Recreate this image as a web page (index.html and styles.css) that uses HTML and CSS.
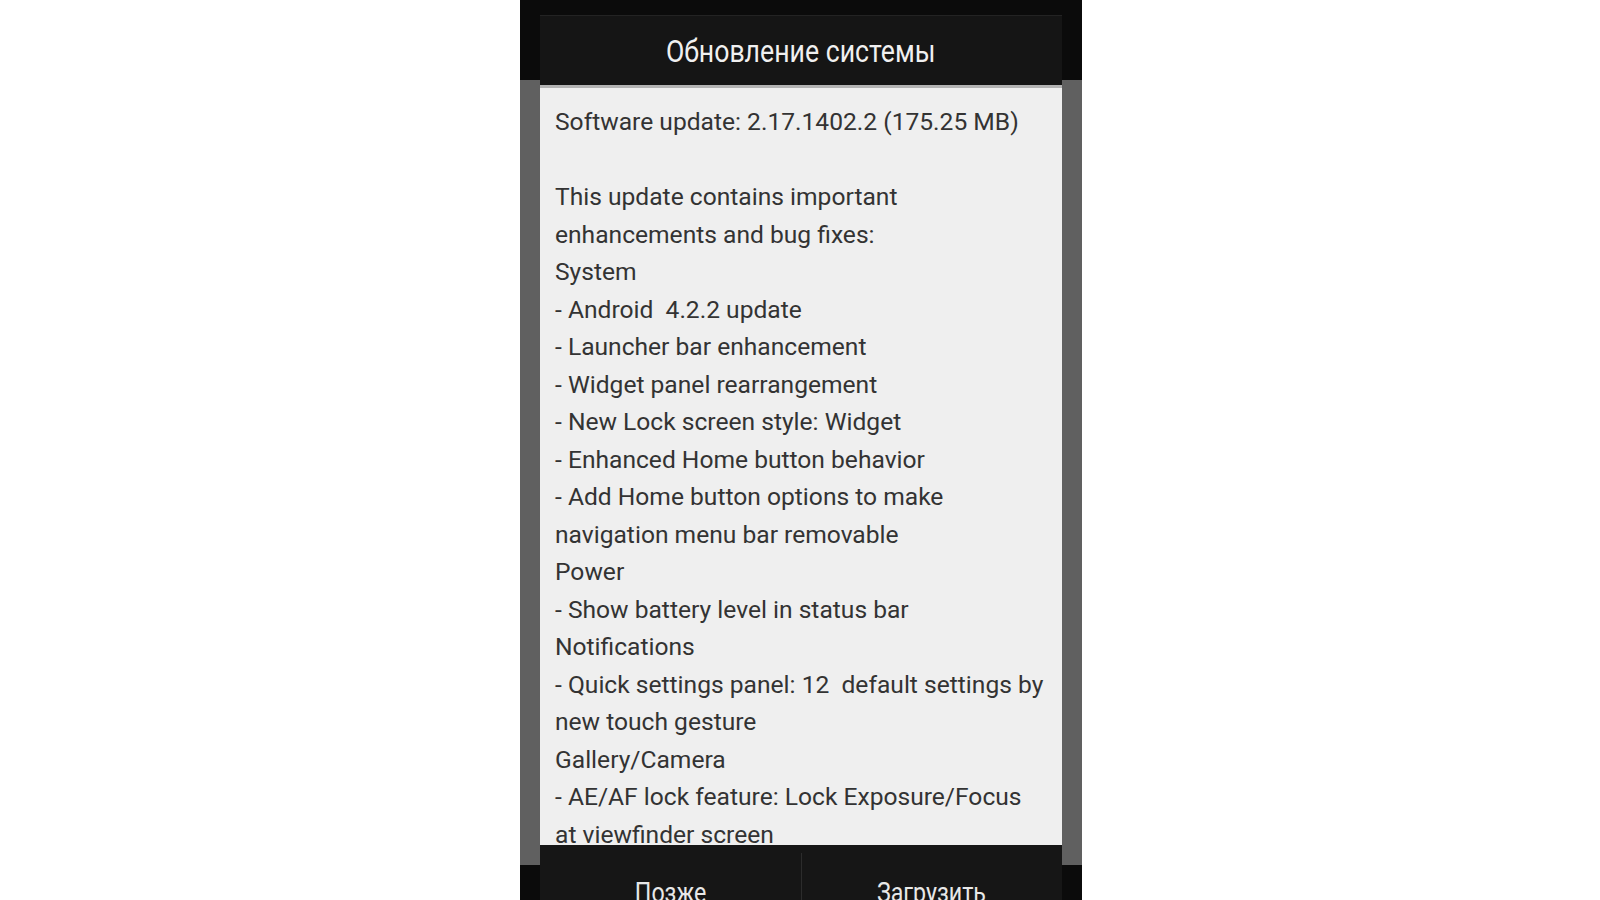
FILE: index.html
```html
<!DOCTYPE html>
<html lang="ru">
<head>
<meta charset="utf-8">
<title>Обновление системы</title>
<link rel="stylesheet" href="styles.css">
</head>
<body>
<div class="phone">
  <div class="backdrop"></div>
  <div class="dialog">
    <div class="dialog-title"><span class="cond">Обновление системы</span></div>
    <div class="dialog-body">
      <div class="line">Software update: 2.17.1402.2 (175.25 MB)</div>
      <div class="line"> </div>
      <div class="line">This update contains important</div>
      <div class="line">enhancements and bug fixes:</div>
      <div class="line">System</div>
      <div class="line">- Android  4.2.2 update</div>
      <div class="line">- Launcher bar enhancement</div>
      <div class="line">- Widget panel rearrangement</div>
      <div class="line">- New Lock screen style: Widget</div>
      <div class="line">- Enhanced Home button behavior</div>
      <div class="line">- Add Home button options to make</div>
      <div class="line">navigation menu bar removable</div>
      <div class="line">Power</div>
      <div class="line">- Show battery level in status bar</div>
      <div class="line">Notifications</div>
      <div class="line">- Quick settings panel: 12  default settings by</div>
      <div class="line">new touch gesture</div>
      <div class="line">Gallery/Camera</div>
      <div class="line">- AE/AF lock feature: Lock Exposure/Focus</div>
      <div class="line">at viewfinder screen</div>
    </div>
    <div class="dialog-buttons">
      <div class="btn"><span class="cond">Позже</span></div>
      <div class="btn-divider"></div>
      <div class="btn"><span class="cond">Загрузить</span></div>
    </div>
  </div>
</div>
</body>
</html>
```
FILE: styles.css
```css
html, body {
  margin: 0;
  padding: 0;
  background: #ffffff;
  height: 900px;
  overflow: hidden;
}

.phone {
  position: relative;
  width: 562px;
  height: 900px;
  margin-left: 520px;
  padding-top: 80px;
  box-sizing: border-box;
  background: #0b0b0b;
}

.backdrop {
  height: 785px;
  background: #606060;
}

.dialog {
  position: absolute;
  left: 20px;
  top: 15px;
  bottom: 0;
  width: 522px;
  display: flex;
  flex-direction: column;
  background: #161616;
}

.dialog-title {
  flex: none;
  height: 73px;
  box-sizing: border-box;
  border-top: 1px solid #232323;
  border-bottom: 3px solid #b3b3b3;
  display: flex;
  align-items: center;
  justify-content: center;
  background: #151515;
  color: #f0f0f0;
  font-family: Roboto, "Liberation Sans", sans-serif;
  font-size: 31px;
  padding-top: 2px;
}

.cond {
  display: inline-block;
  transform: scaleX(0.86);
  transform-origin: center;
  white-space: nowrap;
}

.dialog-body {
  flex: none;
  height: 757px;
  box-sizing: border-box;
  padding: 15px 14px 0 15px;
  overflow: hidden;
  background: #efefef;
  color: #333333;
  font-family: Roboto, "Liberation Sans", sans-serif;
  font-size: 24.6px;
  line-height: 37.5px;
}

.line {
  white-space: pre;
  height: 37.5px;
}

.dialog-buttons {
  flex: 1;
  display: flex;
  background: #161616;
}

.btn {
  flex: 1;
  text-align: center;
  padding-top: 34px;
  color: #e8e8e8;
  font-family: Roboto, "Liberation Sans", sans-serif;
  font-size: 27px;
  line-height: 28px;
}

.btn-divider {
  flex: none;
  width: 1px;
  margin-top: 8px;
  background: #2c2c2c;
}
```
